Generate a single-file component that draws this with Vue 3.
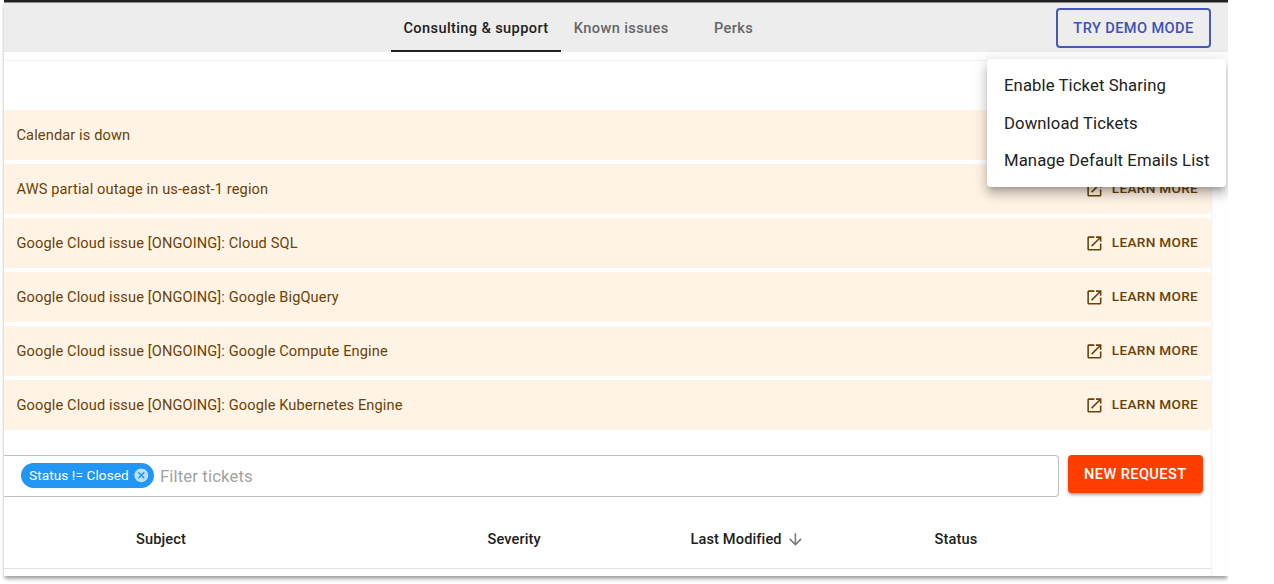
<script setup>
const tabs = [
  { label: 'Consulting & support', cls: 'consulting' },
  { label: 'Known issues', cls: 'known' },
  { label: 'Perks', cls: 'perks' },
]
const menu = ['Enable Ticket Sharing', 'Download Tickets', 'Manage Default Emails List']
const alerts = [
  'Calendar is down',
  'AWS partial outage in us-east-1 region',
  'Google Cloud issue [ONGOING]: Cloud SQL',
  'Google Cloud issue [ONGOING]: Google BigQuery',
  'Google Cloud issue [ONGOING]: Google Compute Engine',
  'Google Cloud issue [ONGOING]: Google Kubernetes Engine',
]
</script>

<template>
  <div class="page">
    <div class="window">
      <div class="viewport">
        <header class="topbar">
          <nav class="tabs">
            <a v-for="t in tabs" :key="t.label" class="tab" :class="t.cls"><span>{{ t.label }}</span></a>
          </nav>
          <button class="demo">TRY DEMO MODE</button>
        </header>
        <main class="card">
          <div class="alerts">
            <div v-for="(a, i) in alerts" :key="a" class="alert">
              <span class="message">{{ a }}</span>
              <a v-if="i > 0" class="learn">
                <svg width="18.8" height="18.8" viewBox="0 0 24 24" fill="currentColor">
                  <path d="M19 19H5V5h7V3H5c-1.11 0-2 .9-2 2v14c0 1.1.89 2 2 2h14c1.1 0 2-.9 2-2v-7h-2v7zM14 3v2h3.59l-9.83 9.83 1.41 1.41L19 6.41V10h2V3h-7z" />
                </svg>
                <span>LEARN MORE</span>
              </a>
            </div>
          </div>
          <div class="filters">
            <div class="field">
              <span class="chip">
                <span class="chip-label">Status != Closed</span>
                <svg width="16.6" height="16.6" viewBox="0 0 24 24">
                  <path fill="#fff" fill-opacity=".7" d="M12 2C6.47 2 2 6.47 2 12s4.47 10 10 10 10-4.47 10-10S17.53 2 12 2zm5 13.59L15.59 17 12 13.41 8.41 17 7 15.59 10.59 12 7 8.41 8.41 7 12 10.59 15.59 7 17 8.41 13.41 12 17 15.59z" />
                </svg>
              </span>
              <span class="placeholder">Filter tickets</span>
            </div>
            <button class="new">NEW REQUEST</button>
          </div>
          <div class="thead">
            <span>Subject</span>
            <span>Severity</span>
            <span class="sorted">Last Modified
              <svg width="18.8" height="18.8" viewBox="0 0 24 24" fill="#7b7b7b">
                <path d="M20 12l-1.41-1.41L13 16.17V4h-2v12.17l-5.58-5.59L4 12l8 8 8-8z" />
              </svg>
            </span>
            <span>Status</span>
          </div>
        </main>
        <div class="menu">
          <div v-for="m in menu" :key="m" class="item">{{ m }}</div>
        </div>
      </div>
    </div>
  </div>
</template>

<style>
body { background: #fff; }
</style>

<style scoped>
* { box-sizing: border-box; }
.page {
  height: 584px;
  padding-left: 4px;
  overflow: hidden;
  font-family: Roboto, "Liberation Sans", sans-serif;
  color: #212121;
}
.window {
  width: 1224px;
  height: 576px;
  box-shadow: 0 4px 4px -1px rgba(0, 0, 0, .3), 0 2px 3px rgba(0, 0, 0, .12);
  clip-path: inset(0 0 -8px -4px);
}
.viewport {
  position: relative;
  height: 576px;
  overflow: hidden;
  background: #fefefe;
}
.topbar {
  display: flex;
  height: 52px;
  border-top: 2px solid #212121;
  background: #ededed;
  box-shadow: inset 0 1px #8b8b8b;
}
.tabs {
  display: flex;
  margin-left: 387px;
  width: 665px;
}
.tab {
  height: 50px;
  padding-top: 3px;
  display: flex;
  align-items: center;
  justify-content: center;
  font-size: 14.6px;
  font-weight: 500;
  letter-spacing: .38px;
  color: #666;
  white-space: nowrap;
}
.consulting {
  width: 170px;
  color: #212121;
  border-bottom: 2px solid #212121;
}
.known { width: 120.5px; padding-bottom: 2px; }
.perks { width: 104px; padding-bottom: 2px; }
button {
  font-family: inherit;
  font-weight: 500;
  white-space: nowrap;
  padding: 0;
}
.demo {
  width: 155px;
  height: 40px;
  margin-top: 5.5px;
  border: 2px solid #4757bb;
  border-radius: 4px;
  background: transparent;
  color: #3f51b5;
  font-size: 14.6px;
  letter-spacing: .4px;
}
.card {
  width: 1207px;
  height: 530px;
  margin-top: 9px;
  padding-top: 49px;
  background: #fff;
  box-shadow: 0 0 2px rgba(0, 0, 0, .14);
}
.alerts {
  display: flex;
  flex-direction: column;
  gap: 4px;
}
.alert {
  display: flex;
  align-items: center;
  justify-content: space-between;
  height: 50px;
  padding: 0 13px 0 12.5px;
  border-radius: 0 4px 4px 0;
  background: #fff3e5;
  color: #6b4205;
  font-size: 14.6px;
  letter-spacing: .12px;
}
.learn {
  display: flex;
  align-items: center;
  gap: 8.5px;
  padding-bottom: 2px;
  font-size: 13.6px;
  font-weight: 500;
  letter-spacing: .31px;
}
.learn svg { position: relative; top: 1px; }
.filters {
  display: flex;
  height: 42px;
  margin-top: 25px;
}
.field {
  display: flex;
  align-items: center;
  width: 1055px;
  padding: 0 0 1px 17px;
  border: 1px solid #c0c0c0;
  border-left: 0;
  border-radius: 0 4px 4px 0;
}
.chip {
  display: flex;
  align-items: center;
  justify-content: space-between;
  width: 133px;
  height: 25px;
  padding: 0 4px 0 8px;
  border-radius: 13px;
  background: #2196f3;
  color: #fff;
  font-size: 13.6px;
  letter-spacing: .09px;
}
.chip-label { padding-bottom: 2px; }
.placeholder {
  margin-left: 6px;
  padding-top: 1px;
  font-size: 16.7px;
  letter-spacing: .13px;
  color: #a2a2a2;
}
.new {
  width: 135.5px;
  height: 38px;
  margin-left: 8.5px;
  border: 0;
  border-radius: 4px;
  background: #ff3d00;
  color: #fff;
  font-size: 14.6px;
  letter-spacing: .4px;
  box-shadow: 0 2px 3px rgba(0, 0, 0, .35);
}
.thead {
  display: grid;
  grid-template-columns: 351.5px 203px 244px 1fr;
  align-items: center;
  height: 72px;
  padding: 12px 0 0 132px;
  border-bottom: 1px solid #e2e2e2;
  font-size: 14.6px;
  font-weight: 500;
  letter-spacing: .12px;
}
.sorted { display: flex; align-items: center; gap: 4px; padding-top: 1px; }
.menu {
  position: absolute;
  left: 983px;
  top: 59px;
  width: 239px;
  height: 128px;
  padding: 8px 0;
  border-radius: 4px;
  background: #fff;
  box-shadow: 0 5px 5px -3px rgba(0, 0, 0, .2), 0 8px 10px 1px rgba(0, 0, 0, .14), 0 3px 14px 2px rgba(0, 0, 0, .12);
}
.item {
  height: 37.5px;
  padding-left: 17px;
  font-size: 16.7px;
  line-height: 37.5px;
  letter-spacing: .1px;
  white-space: nowrap;
}
</style>
